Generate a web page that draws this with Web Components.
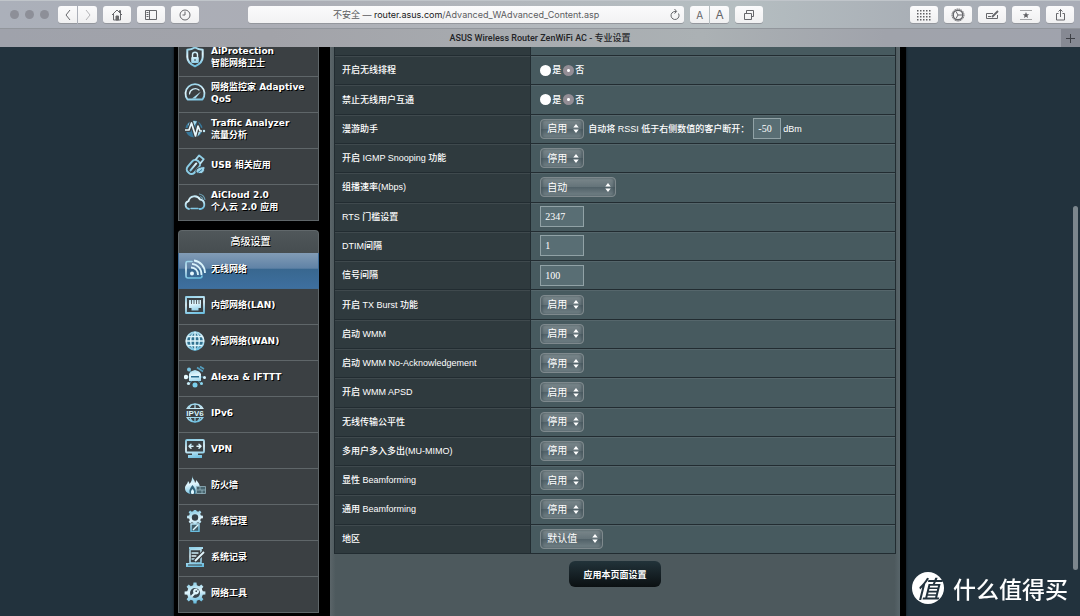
<!DOCTYPE html>
<html lang="zh-CN">
<head>
<meta charset="utf-8">
<title>ASUS Wireless Router ZenWiFi AC - 专业设置</title>
<style>
  html, body { height: 100%; margin: 0; }
  body { overflow: hidden; background: #22323d; font-family: "Liberation Sans", "Noto Sans CJK SC", sans-serif; }
</style>
</head>
<body>
<browser-window>
  <side-menu slot="side">
    <menu-item icon="shield">AiProtection<br>智能网络卫士</menu-item>
    <menu-item icon="gauge">网络监控家 Adaptive QoS</menu-item>
    <menu-item icon="traffic">Traffic Analyzer<br>流量分析</menu-item>
    <menu-item icon="usb">USB 相关应用</menu-item>
    <menu-item icon="cloud">AiCloud 2.0<br>个人云 2.0 应用</menu-item>
  </side-menu>
  <side-menu slot="side" heading="高级设置">
    <menu-item icon="wifi" active>无线网络</menu-item>
    <menu-item icon="lan">内部网络(LAN)</menu-item>
    <menu-item icon="globe">外部网络(WAN)</menu-item>
    <menu-item icon="alexa">Alexa &amp; IFTTT</menu-item>
    <menu-item icon="ipv6">IPv6</menu-item>
    <menu-item icon="vpn">VPN</menu-item>
    <menu-item icon="fire">防火墙</menu-item>
    <menu-item icon="admin">系统管理</menu-item>
    <menu-item icon="log">系统记录</menu-item>
    <menu-item icon="tools">网络工具</menu-item>
  </side-menu>
  <settings-panel slot="content"></settings-panel>
</browser-window>
<site-watermark></site-watermark>

<script>
const make = (tag, html) => customElements.define(tag, class extends HTMLElement {
  constructor() {
    super();
    const t = document.createElement('template');
    t.innerHTML = html;
    this.attachShadow({ mode: 'open' }).append(t.content.cloneNode(true));
  }
});

/* ---------- icons ---------- */
const gearPath = (cx, cy, r, n) => {
  let d = '';
  for (let i = 0; i < n; i++) {
    [[-.3, r * .76], [-.18, r], [.18, r], [.3, r * .76]].forEach(([o, q], k) => {
      const a = (i + o) * 2 * Math.PI / n - Math.PI / 2;
      d += (i || k ? 'L' : 'M') + (cx + q * Math.cos(a)).toFixed(2) + ' ' + (cy + q * Math.sin(a)).toFixed(2);
    });
  }
  return d + 'Z';
};
const S = 'fill="none" stroke="url(#g)" stroke-linejoin="round" stroke-linecap="round"';
const F = 'fill="url(#g)"';
const ICONS = {
  shield: `<path ${S} stroke-width="2" d="M11 1.5C8.5 3 6 3.6 3.300 3.700V11c0 4.200 3.200 7.300 7.700 9.300 4.500-2 7.700-5.100 7.700-9.300V3.700C16 3.600 13.500 3 11 1.500Z"/><path ${S} stroke-width="1.400" d="M8.500 11V8.800a2.500 2.500 0 0 1 5 0V11"/><rect ${F} x="7.200" y="11" width="7.600" height="6" rx="1"/><path stroke="#3b4043" d="M11 13v2"/>`,
  gauge: `<path ${S} stroke-width="1.800" d="M3.500 17.500A9.500 9.500 0 1 1 18.500 17.500Z"/><path ${S} stroke-width="1.200" d="M5.500 12a5.800 5.800 0 0 1 9.500-4"/><path ${F} d="M8 16.500 17 9.500 11.500 16.500Z"/>`,
  traffic: `<circle cx="10" cy="11" r="8.500" fill="#37789b"/><path fill="#a9dced" d="M4 6Q8 1.500 13 3.500L10 8 5 9ZM13 12l4 1q-1 4-5 6Z"/><path fill="none" stroke="#3b4043" stroke-width="4" d="M0 12h5L7.500 5l4 13L14 8l2 4h5"/><path fill="none" stroke="#e6f7fc" stroke-width="1.700" stroke-linejoin="round" d="M1 12h4L7.500 5l4 13L14 8l2 5h2"/><circle cx="20" cy="13" r="1.200" fill="#bfe8f5"/>`,
  usb: `<g transform="rotate(40 11 11)"><rect x="6.500" y="6" width="9" height="15" rx="4" fill="none" stroke="#8bcde6" stroke-width="2"/><path ${S} stroke-width="1.800" d="M8 6V1h6v5"/><path ${S} stroke-width="2" d="M11 9v9"/></g><path fill="#9ad4ea" stroke="#3b4043" d="M12 18.500c-1-4 4-6 9-6 0 6-3 9-9 6Z"/><path stroke="#37789b" d="m14 18.500 4-3"/>`,
  cloud: `<path ${S} stroke-width="1.800" d="M5 19a4 4 0 0 1-.500-7.800A6.200 6.200 0 0 1 16 9.500a4.900 4.900 0 0 1 1 9.500h-1.500"/><path ${S} stroke-width="1.500" d="M7 18.500h7"/><path fill="none" stroke="#6a9fb3" stroke-width="1.200" d="M15 4a7 7 0 0 1 6 6M16 6.500a4 4 0 0 1 3 3"/>`,
  wifi: `<path ${S} stroke-width="1.600" d="M8 3.500H3.500Q2 3.500 2 5v13q0 2 2 2h12q2 0 2-2"/><circle cx="8" cy="15.500" r="2" fill="#e6f8ff"/><path fill="none" stroke="#d9f3fb" stroke-width="1.800" d="M7 9.500a7 7 0 0 1 7 7.500M8 5.800A10.500 10.500 0 0 1 17.500 17M10 2.500A12.500 12.500 0 0 1 21 15"/>`,
  lan: `<rect ${S} stroke-width="1.800" x="2" y="3" width="18" height="16"/><path ${F} d="M5 6h12v8h-2.500v2.500h-7V14H5Z"/><path stroke="#3b4043" stroke-width=".8" d="M7.500 6v4M10 6v4M12.500 6v4M15 6v4"/>`,
  globe: `<circle ${S} stroke-width="1.700" cx="11" cy="11" r="8.800" style="fill:#31718f"/><ellipse ${S} stroke-width="1.500" cx="11" cy="11" rx="4.300" ry="8.800"/><path fill="none" stroke="#def5fc" stroke-width="1.500" d="M2 11.010h18M3.500 6.500h15M3.500 15.500h15M11 2v18"/>`,
  alexa: `<path stroke="#4b8faa" d="M2 11h18M5 4l12 14M5 18 11 11"/><path ${F} d="M5 15V8q1-3 6-4 5 1 6 4v7Z"/><path fill="#286a8c" d="M7 10h8v1.500H7Z"/><circle cx="2" cy="11" r="2.200" fill="#e8faff"/><circle cx="20.500" cy="11.500" r="1.500" fill="#d4f4ff"/><circle cx="5" cy="3.500" r="2" fill="#79c4e2"/><circle cx="4.500" cy="17.500" r="1.600" fill="#c9edf8"/><circle cx="11" cy="19" r="2.500" fill="#7bd0ed"/><circle cx="17.500" cy="17.500" r="1.500" fill="#8bd6ee"/><path stroke="#549fbf" stroke-width="1.600" d="M13 1.500l6 4M16 .5l4 2.500"/>`,
  ipv6: `<circle ${S} stroke-width="1.500" cx="11" cy="11" r="9"/><path ${S} stroke-width="1.200" d="M3.500 6.500h15M3.500 15.500h15M11 2v4M7 3Q5 6 5 7M15 3q2 3 2 4M11 16v4M6 15q0 2 2 4M16 15q0 2-2 4"/><rect x="1" y="7" width="20" height="8" fill="#3b4043"/><text x="11" y="14" text-anchor="middle" fill="#d8f3fb" font-family="Liberation Sans, sans-serif" font-size="8" font-weight="700">IPV6</text>`,
  vpn: `<rect ${S} stroke-width="1.800" x="2" y="2" width="18" height="12.500" rx="1"/><path ${S} stroke-width="1.500" d="M9 8.300H5m2-2-2 2 2 2M13 8.300h4m-2-2 2 2-2 2"/><path ${F} d="M8 15h6v2h4v3H4v-3h4Z"/>`,
  fire: `<path ${F} d="M8 1c0 4 3 4.500 3 8 1-1 1-2 1-3 3 3 4.500 5.500 3.500 9-.800 3-3 5-6.500 5-5 0-8-2-8-6 0-3 2.500-3.500 3-7 1 1 1.500 2 1.500 3 2-2 3-5 2.500-9Z"/><path fill="#31637a" d="M8.500 11q-4.500 5-2.500 9h5q2-4-2.500-9Z"/><path fill="#def7ff" d="M8.500 15q-2.500 2.500-1 5h2q1.500-2.500-1-5Z"/><rect x="12.500" y="12.500" width="9" height="7.500" fill="#48656f"/><path fill="none" stroke="#94b4be" stroke-width=".8" d="M12.500 12.500h9v7h-9ZM12.500 16h9M16 12.500V16M18 16v4"/>`,
  admin: `<path ${F} d="${gearPath(11, 7, 8, 8)}"/><circle cx="11" cy="7.500" r="3.200" fill="#344047"/><rect ${S} stroke-width="1.500" x="7" y="14" width="8" height="7.500" style="fill:#405d69"/><path fill="none" stroke="#e2f9ff" stroke-width="1.500" d="m9 20 5-5"/>`,
  log: `<path ${F} d="M5 1h14v2H5ZM2 17h18v4H2Z"/><rect ${S} stroke-width="1.500" x="6" y="3.500" width="11" height="13.500"/><path ${S} stroke-width="1.300" d="M8 7h6M8 10h4M8 13h3"/><path stroke="#3b4043" stroke-width="4" d="m11 15 9-9"/><path stroke="#e4f8ff" stroke-width="1.800" d="m11 15 9-9"/><path stroke="#3b4043" d="M4 19h14"/>`,
  tools: `<path ${F} d="${gearPath(11, 11, 10.500, 8)}"/><circle cx="11" cy="11" r="5" fill="#38464e"/><path fill="none" stroke="#dff7fe" stroke-width="2" stroke-linecap="round" d="m8 14 3.500-3.500M14 9a2 2 0 1 1-1.500-1.500"/>`,
  back: `<path d="m13 6-4 5 4 5"/>`,
  forward: `<path stroke="#b5b5b8" d="m9 6 4 5-4 5"/>`,
  home: `<path d="M6 11 11 6l5 5M7.500 10v6h7v-6M13.500 8V6.500h1V9"/><path fill="#666" d="M10 12h2.500v4H10Z"/>`,
  sidebar: `<path d="M5.500 6.500h11v9h-11ZM9.500 6.500v9M6.500 8.500h2M6.500 10.500h2M6.500 12.500h2"/>`,
  clock: `<circle cx="11" cy="11" r="5"/><path d="M11 7.500V11H8.500"/>`,
  reload: `<path d="M14.500 9.500A4 4 0 1 1 11 7.500h1M10.500 5l2.200 2.500-2.200 2"/>`,
  windows: `<path d="M6.500 9.500h7v6h-7ZM8.500 9V6.500h7v6H14"/>`,
  grid: `<g fill="#606064" stroke="none">${[7, 10, 13, 16].map(y => [5, 8, 11, 14, 17].map(x => `<rect x="${x - 1}" y="${y - 1}" width="1.500" height="1.500"/>`).join('')).join('')}</g>`,
  gear: `<circle cx="11" cy="11" r="6" stroke-dasharray="1.300 .6"/><circle cx="11" cy="11" r="4.800" stroke-width="1.400"/><path d="m11 11 4 0M11 11 9 7.500M11 11 9 14.500"/>`,
  compose: `<path d="M12 9.500H5.500v5h11V11"/><path stroke-width="1.800" d="m11 13 6-6"/><path d="M7 12.500h3"/>`,
  star: `<path stroke="#a4a5a7" d="M5 6.500h12M5 15.500h12"/><path fill="#606064" stroke="none" d="m11 8 .9 2.200 2.300.1-1.800 1.500.7 2.200-2.100-1.300L8.900 14l.7-2.200-1.800-1.500 2.300-.1Z"/>`,
  share: `<path d="M9.500 9.500h-2v6.500h8V9.500h-2M11.500 13V5.500M9.500 7.500l2-2 2 2"/>`
};
customElements.define('line-icon', class extends HTMLElement {
  constructor() {
    super();
    this.attachShadow({ mode: 'open' });
  }
  connectedCallback() {
    this.shadowRoot.innerHTML = `<style>:host{display:block;width:22px;height:22px;flex:none}svg{display:block}text{text-shadow:none}</style>
      <svg width="22" height="22" viewBox="0 0 22 22" fill="none" stroke="${this.hasAttribute('chrome') ? '#66676b' : 'none'}" aria-hidden="true">
      <defs><linearGradient id="g" gradientUnits="userSpaceOnUse" x1="0" y1="0" x2="4" y2="22"><stop offset="0" stop-color="#74c3e0"/><stop offset=".5" stop-color="#e2f6fd"/><stop offset="1" stop-color="#69bddf"/></linearGradient></defs>
      ${ICONS[this.getAttribute('name')]}</svg>`;
  }
});

/* ---------- browser chrome ---------- */
const btn = (icon, label) => `<button aria-label="${label}"><line-icon chrome name="${icon}"></line-icon></button>`;
make('browser-toolbar', `
<style>
  :host { display: flex; align-items: center; height: 28px; box-sizing: border-box; padding: 0 6px 0 10px;
    background: linear-gradient(90deg, #abb0ba, #abadb5 25%, #b3b8bd 50%, #b5bec1 68%, #a9afb6 85%, #a9adb7); border-top: 1px solid #c0c5ca; }
  .group { display: flex; gap: 6px; }
  .pair { display: flex; gap: 1px; }
  .lights { display: flex; gap: 6px; margin-right: 9px; }
  .lights i { width: 9px; height: 9px; border-radius: 50%; background: #8d8f98; }
  button { width: 28px; height: 17px; padding: 0; border: 0; border-radius: 3px; background: linear-gradient(#fbfbfc, #f0f0f1);
    box-shadow: 0 1px 0 #94979d; display: flex; align-items: center; justify-content: center; color: #636468; font: 12px Inter, sans-serif; }
  .pair button { width: 19px; }
  .pair button:first-child { border-radius: 3px 0 0 3px; }
  .pair button:last-child { border-radius: 0 3px 3px 0; }
  .pair .small { font-size: 10px; }
  .url { display: grid; align-items: center; width: 41%; height: 17px; border-radius: 3px; background: linear-gradient(#fbfbfc, #f2f2f3); box-shadow: 0 1px 0 #94979d; margin-right: 6px; }
  .url > * { grid-area: 1 / 1; }
  .url p { margin: 0; text-align: center; font: 9px Inter, "Noto Sans CJK SC", sans-serif; color: #5b5c60; white-space: nowrap; }
  .url b { font-weight: 400; color: #17181a; }
  .url .reload { justify-self: end; width: 19px; background: none; box-shadow: none; }
  .s1 { flex: 1 1 0; } .s3 { flex: 3 1 0; }
</style>
<div class="lights"><i></i><i></i><i></i></div>
<div class="group">
  <div class="pair">${btn('back', '后退')}${btn('forward', '前进')}</div>
  ${btn('home', '主页')}${btn('sidebar', '边栏')}${btn('clock', '历史')}
</div>
<div class="s1"></div>
<div class="url"><p>不安全 — <b>router.asus.com</b>/Advanced_WAdvanced_Content.asp</p><button class="reload" aria-label="重新载入"><line-icon chrome name="reload"></line-icon></button></div>
<div class="group"><div class="pair"><button class="small">A</button><button>A</button></div>${btn('windows', '标签页')}</div>
<div class="s3"></div>
<div class="group">${btn('grid', '网格')}${btn('gear', '设置')}${btn('compose', '编辑')}${btn('star', '书签')}${btn('share', '共享')}</div>
`);

make('tab-bar', `
<style>
  :host { display: grid; grid-template-columns: 19px 1fr 19px; height: 19px; box-sizing: border-box; border-top: 1px solid #92969c;
    background: linear-gradient(90deg, #9fa2ab, #a2a3a9 25%, #a8acb0 50%, #abb1b4 65%, #a0a3ab 82%, #a0a3ad); }
  p { grid-column: 2; margin: 0; text-align: center; font: 500 9px/18px Roboto, "Noto Sans CJK SC", sans-serif; color: #232427; }
  button { padding: 0; border: 0; background: #868993; display: grid; place-items: center; }
</style>
<p>ASUS Wireless Router ZenWiFi AC - 专业设置</p>
<button aria-label="新标签页"><svg width="9" height="9" viewBox="0 0 9 9" stroke="#3d3f45"><path d="M4.500 0v9M0 4.500h9"/></svg></button>
`);

make('browser-window', `
<style>
  :host { display: grid; grid-template-rows: auto auto minmax(0, 1fr); height: 100vh; }
  main { position: relative; overflow: hidden; background: #22323d; }
  .page { display: grid; grid-template-columns: 141px minmax(0, 1fr); gap: 11px; box-sizing: border-box; width: 100%; max-width: 732px; min-height: calc(100% + 6px);
    margin: -6px auto 0; padding: 0 6px 0 4px; background: #000; box-shadow: 0 0 2px #0b1217; }
  .side { display: flex; flex-direction: column; gap: 9px; }
  .thumb { position: absolute; right: 2px; top: 28%; bottom: 8%; width: 5px; border-radius: 3px; background: #7c868d; }
</style>
<browser-toolbar></browser-toolbar>
<tab-bar></tab-bar>
<main>
  <div class="page"><nav class="side"><slot name="side"></slot></nav><slot name="content"></slot></div>
  <div class="thumb"></div>
</main>
`);

/* ---------- router navigation ---------- */
customElements.define('side-menu', class extends HTMLElement {
  constructor() {
    super();
    this.attachShadow({ mode: 'open' });
  }
  connectedCallback() {
    const h = this.getAttribute('heading');
    this.shadowRoot.innerHTML = `<style>
      :host { display: block; }
      h2 { margin: 0; box-sizing: border-box; height: 23px; padding-left: 4px; border: 1px solid #61686b; border-bottom: 0; border-radius: 4px 4px 0 0; text-align: center;
        background: linear-gradient(#50575a, #464d50); color: #fff; font: 500 10px/22px "DejaVu Sans", "Noto Sans CJK SC", sans-serif; text-shadow: 1px 1px 0 #000; }
    </style>${h ? `<h2>${h}</h2>` : ''}<slot></slot>`;
  }
});
customElements.define('menu-item', class extends HTMLElement {
  constructor() {
    super();
    this.attachShadow({ mode: 'open' });
  }
  connectedCallback() {
    this.shadowRoot.innerHTML = `<style>
      :host { display: block; }
      a { display: flex; align-items: center; gap: 5px; box-sizing: border-box; height: 36px; padding: 0 5px 4px; border: 1px solid #5f6669; border-top: 0;
        background: #3b4043; color: #fff; text-decoration: none; font: bold 9px/12px "DejaVu Sans", "Noto Sans CJK SC", sans-serif; text-shadow: 1px 1px 0 #000; }
      :host([active]) a { border-color: #3f6d99; background: linear-gradient(#829cb6, #5f82a6 44%, #38678f 45%, #3e6f9f); }
    </style><a href="#"><line-icon name="${this.getAttribute('icon')}"></line-icon><span><slot></slot></span></a>`;
  }
});

/* ---------- wireless settings ---------- */
const ROWS = [
  ['开启无线排程', 'radio'],
  ['禁止无线用户互通', 'radio'],
  ['漫游助手', 'roam'],
  ['开启 IGMP Snooping 功能', 'select', '停用'],
  ['组播速率(Mbps)', 'select', '自动', 'wide'],
  ['RTS 门槛设置', 'text', '2347'],
  ['DTIM间隔', 'text', '1'],
  ['信号间隔', 'text', '100'],
  ['开启 TX Burst 功能', 'select', '启用'],
  ['启动 WMM', 'select', '启用'],
  ['启动 WMM No-Acknowledgement', 'select', '停用'],
  ['开启 WMM APSD', 'select', '启用'],
  ['无线传输公平性', 'select', '停用'],
  ['多用户多入多出(MU-MIMO)', 'select', '停用'],
  ['显性 Beamforming', 'select', '启用'],
  ['通用 Beamforming', 'select', '停用'],
  ['地区', 'select', '默认值', 'mid']
];
const select = (id, value, size = '') => `<span class="pick ${size}"><select id="${id}"><option>${value}</option></select><svg width="6" height="9" viewBox="0 0 6 9" fill="#fff"><path d="M.3 3.600 3 0l2.700 3.600ZM.3 5.400h5.400L3 9Z"/></svg></span>`;
const control = ([label, type, value, size], i) => {
  const id = 'f' + i;
  if (type === 'radio') return `<span class="line radios" role="radiogroup" aria-label="${label}"><label><input type="radio" name="${id}">是</label><label><input type="radio" name="${id}" checked>否</label></span>`;
  if (type === 'text') return `<input type="text" id="${id}" value="${value}">`;
  if (type === 'roam') return `<span class="line">${select(id, '启用')}<label class="hint" for="rssi">自动将 RSSI 低于右侧数值的客户断开：</label><input class="short" type="text" id="rssi" value="-50"><span class="unit">dBm</span></span>`;
  return select(id, value, size);
};
make('settings-panel', `
<style>
  :host { display: block; padding: 0 4px; background: linear-gradient(90deg, #5b6569, #4d595d 1%, #4d595d 99%, #58656a); color: #fff; }
  table { width: 100%; height: 513px; border-collapse: collapse; table-layout: fixed; font: 500 9px/12px "Liberation Sans", "Noto Sans CJK SC", sans-serif; }
  tr { height: 29px; }
  .lead { height: 14px; }
  th, td { padding: 0; border: 1px solid #222c31; text-align: left; font-weight: 500; box-shadow: inset 0 1px 0 #ffffff14; }
  th { width: 35%; padding-left: 7px; box-sizing: border-box; background: #2f3a3e; }
  td { padding-left: 9px; background: #475a5f; }
  .line { display: flex; align-items: center; }
  .pick { display: flex; align-items: center; position: relative; width: 44px; }
  .pick.wide { width: 76px; } .pick.mid { width: 63px; }
  .pick svg { position: absolute; right: 5px; pointer-events: none; }
  select { appearance: none; width: 100%; height: 20px; margin: 0; padding: 0 0 0 6px; border: 1px solid #7e898d; border-radius: 4px; color: #fff;
    background: linear-gradient(#7b878b, #65747a 48%, #506067 50%, #738287); box-shadow: inset 2px 0 2px #3f4f5580, inset -2px 0 2px #3f4f5580;
    font: 10px "Liberation Serif", "Noto Sans CJK SC", serif; }
  input[type=text] { display: block; box-sizing: border-box; width: 44px; height: 21px; margin: 0; padding: 0 4px; border: 1px solid #91a2a6; background: #596e74; color: #fff; font: 10px "Liberation Serif", serif; }
  input.short[type=text] { width: 28px; }
  input[type=radio] { appearance: none; width: 11px; height: 11px; margin: 0 1px 0 0; border-radius: 50%; background: #fff; }
  input[type=radio]:checked { background: radial-gradient(circle, #fff 1px, #938d95 2px); }
  .radios { gap: 2px; }
  .radios label { display: flex; align-items: center; }
  .hint { margin: 0 4px; }
  .unit { margin-left: 2px; }
  .apply { display: block; width: 92px; height: 26px; margin: 7px auto 0; padding: 0; border: 0; border-radius: 6px; color: #fff;
    background: linear-gradient(#22333a, #0b1012); font: bold 9px "Liberation Sans", "Noto Sans CJK SC", sans-serif; }
</style>
<table><tbody>
<tr class="lead"><th></th><td></td></tr>
${ROWS.map((r, i) => `<tr><th scope="row">${r[1] === 'radio' ? r[0] : `<label for="f${i}">${r[0]}</label>`}</th><td>${control(r, i)}</td></tr>`).join('')}
</tbody></table>
<button class="apply">应用本页面设置</button>
`);

make('site-watermark', `
<style>
  :host { position: fixed; right: 12px; bottom: 11px; display: flex; align-items: center; gap: 9px; color: #fff; font: 500 23px/34px "Noto Sans CJK SC", sans-serif; }
  i { width: 32px; height: 32px; border-radius: 50%; background: #fff; color: #22323d; text-align: center; font: italic 500 24px/32px "Noto Sans CJK SC", sans-serif; }
</style>
<i>值</i><span>什么值得买</span>
`);
</script>
</body>
</html>
